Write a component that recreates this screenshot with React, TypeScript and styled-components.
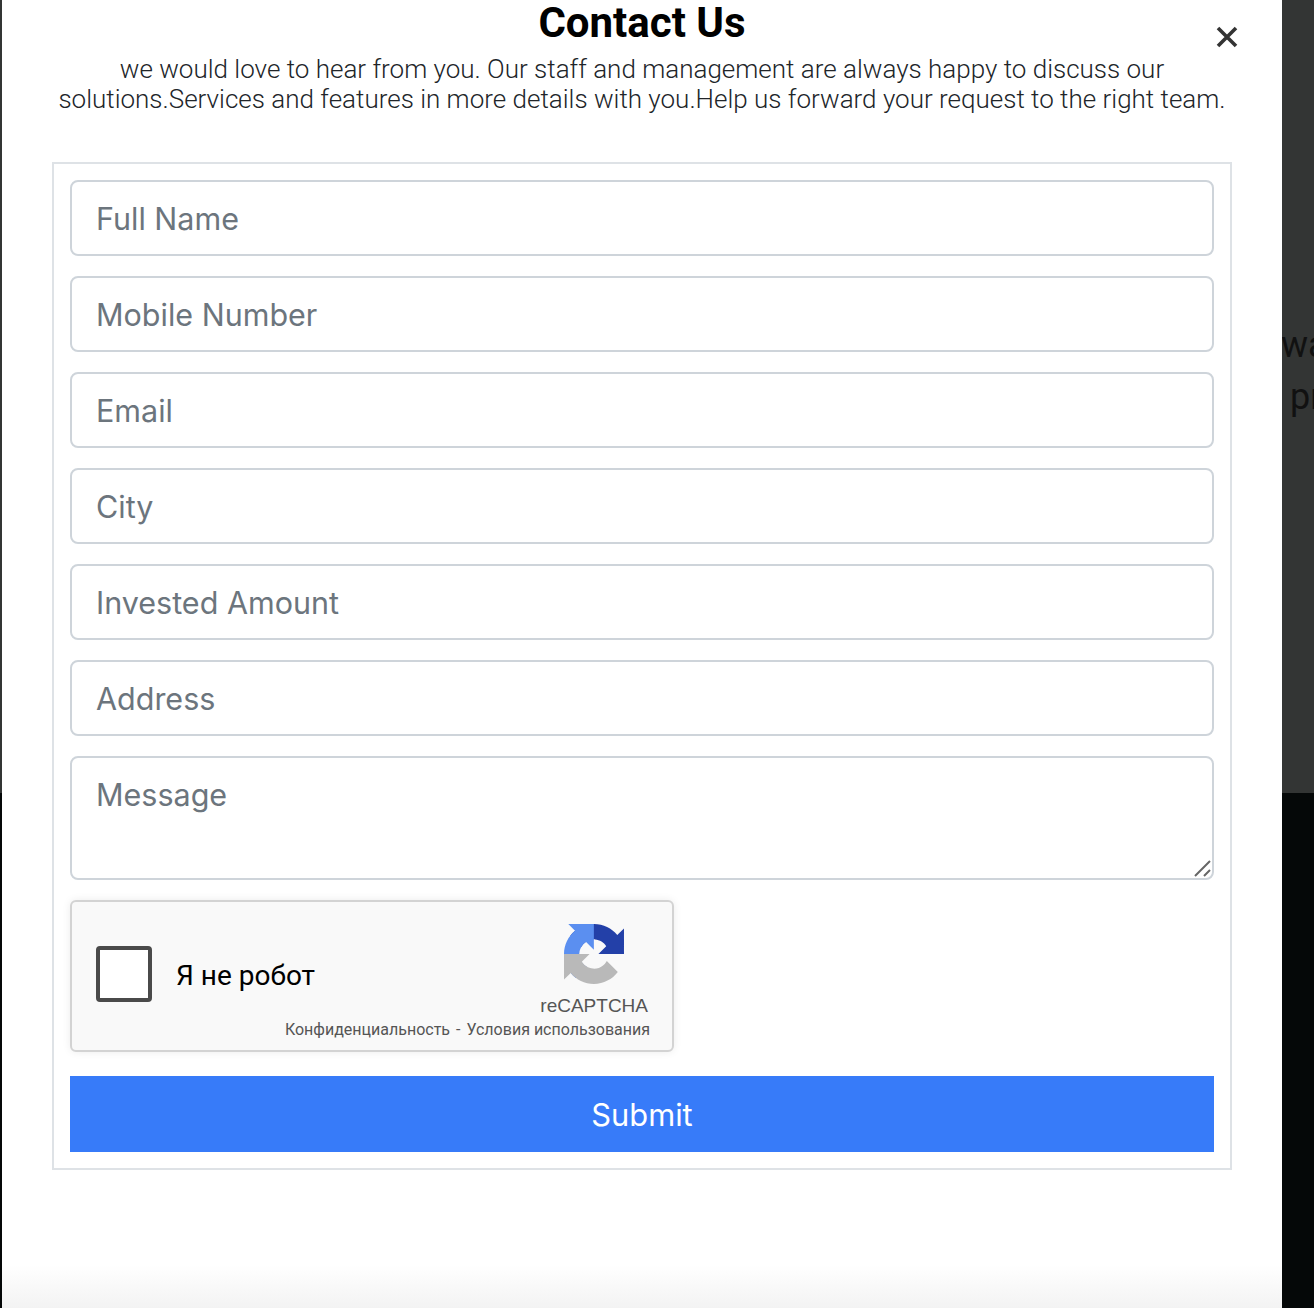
import styled, { createGlobalStyle } from 'styled-components'

const fields = ['Full Name', 'Mobile Number', 'Email', 'City', 'Invested Amount', 'Address']

const GlobalStyle = createGlobalStyle`
  html, body {
    margin: 0;
    padding: 0;
    background: #050808;
  }
  * {
    box-sizing: border-box;
  }
`

const App = () => {
  return (
    <Page>
      <GlobalStyle />
      <Backdrop>
        <BackdropLine $indent={1281}>wa</BackdropLine>
        <BackdropLine $indent={1290}>pr</BackdropLine>
      </Backdrop>
      <Modal>
        <CloseButton aria-label='Close'>
          <svg width='24' height='24' viewBox='0 0 24 24'>
            <path d='M3 3 L21 21 M21 3 L3 21' stroke='#333' strokeWidth='3.6' fill='none' />
          </svg>
        </CloseButton>
        <Title>Contact Us</Title>
        <Intro>
          we would love to hear from you. Our staff and management are always happy to discuss our
          <br />
          solutions.Services and features in more details with you.Help us forward your request to the right team.
        </Intro>
        <Form>
          {fields.map((field) => (
            <Input key={field} placeholder={field} />
          ))}
          <MessageWrap>
            <Message placeholder='Message' />
            <Grip width='18' height='18' viewBox='0 0 18 18'>
              <path d='M1 16 L16 1 M10 16 L16 10' stroke='#666' strokeWidth='2' fill='none' />
            </Grip>
          </MessageWrap>
          <Captcha>
            <CheckBox />
            <CaptchaLabel>Я не робот</CaptchaLabel>
            <CaptchaBrand>
              <CaptchaLogo viewBox='0 0 64 64'>
                <path d='M64 31.955l-.033-1.37V4.687l-7.16 7.16C50.948 4.674 42.033.093 32.05.093c-10.4 0-19.622 4.96-25.458 12.64l11.736 11.86a15.55 15.55 0 0 1 4.754-5.334c2.05-1.6 4.952-2.906 8.968-2.906.485 0 .86.057 1.135.163 4.976.393 9.288 3.14 11.828 7.124l-8.307 8.307 32.294.007' fill='#2340a8' />
                <path d='M31.862.094l-1.37.033H4.594l7.16 7.16C4.58 13.147 0 22.06 0 32.046c0 10.4 4.96 19.622 12.64 25.458l11.86-11.736a15.55 15.55 0 0 1-5.334-4.754c-1.6-2.05-2.906-4.952-2.906-8.968 0-.485.057-.86.163-1.135.393-4.976 3.14-9.288 7.124-11.828l8.307 8.307.007-32.294' fill='#5b8ff0' />
                <path d='M.001 32.045l.033 1.37v25.898l7.16-7.16c5.86 7.173 14.775 11.754 24.76 11.754 10.4 0 19.621-4.96 25.458-12.64L45.677 39.407a15.55 15.55 0 0 1-4.754 5.334c-2.05 1.6-4.952 2.906-8.968 2.906-.485 0-.86-.057-1.135-.163-4.976-.393-9.288-3.14-11.828-7.124l8.307-8.307-32.294-.007' fill='#b9b9b9' />
              </CaptchaLogo>
              <CaptchaName>reCAPTCHA</CaptchaName>
            </CaptchaBrand>
            <CaptchaLinks>
              <span>Конфиденциальность</span>
              <span>-</span>
              <span>Условия использования</span>
            </CaptchaLinks>
          </Captcha>
          <Submit type='button'>Submit</Submit>
        </Form>
      </Modal>
    </Page>
  )
}

const Page = styled.div`
  position: relative;
  height: 1308px;
  overflow: hidden;
  background: #050808;
  font-family: Roboto, "Liberation Sans", sans-serif;
`

// dimmed page behind the modal, only a sliver of it shows
const Backdrop = styled.div`
  height: 793px;
  padding-top: 319px;
  background: #333534;
  overflow: hidden;
`

const BackdropLine = styled.div<{ $indent: number }>`
  margin-left: ${(p) => p.$indent}px;
  font-size: 36px;
  line-height: 52px;
  color: #111;
  white-space: nowrap;
`

const Modal = styled.div`
  position: absolute;
  top: 0;
  left: 2px;
  width: 1280px;
  height: 1308px;
  padding: 0 50px;
  display: flex;
  flex-direction: column;
  background: linear-gradient(to bottom, #fff 1265px, #f3f3f3 1308px);
`

const CloseButton = styled.div`
  position: absolute;
  top: 25px;
  left: 1213px;
  width: 24px;
  height: 24px;
  display: flex;
`

const Title = styled.h1`
  margin: 0;
  text-align: center;
  font-size: 42px;
  line-height: 46px;
  font-weight: 700;
  color: #000;
`

const Intro = styled.p`
  margin: 8px 0 48px;
  text-align: center;
  font-size: 26px;
  line-height: 30px;
  font-weight: 300;
  color: #212529;
  white-space: nowrap;
`

const Form = styled.form`
  width: 1180px;
  height: 1008px;
  padding: 16px;
  display: flex;
  flex-direction: column;
  gap: 20px;
  border: 2px solid #dee2e6;
`

const Input = styled.input`
  display: block;
  width: 100%;
  height: 76px;
  flex: none;
  padding: 0 24px;
  border: 2px solid #ced4da;
  border-radius: 8px;
  background: #fff;
  font-family: Inter, Roboto, sans-serif;
  font-size: 30.5px;

  &::placeholder {
    color: #6c757d;
    opacity: 1;
  }
`

const MessageWrap = styled.div`
  position: relative;
  height: 124px;
  flex: none;
`

const Message = styled.textarea`
  display: block;
  width: 100%;
  height: 100%;
  padding: 13px 24px;
  border: 2px solid #ced4da;
  border-radius: 8px;
  resize: none;
  font-family: Inter, Roboto, sans-serif;
  font-size: 30.5px;
  line-height: 48px;

  &::placeholder {
    color: #6c757d;
    opacity: 1;
  }
`

const Grip = styled.svg`
  position: absolute;
  right: 2px;
  bottom: 2px;
`

const Captcha = styled.div`
  position: relative;
  width: 604px;
  height: 152px;
  flex: none;
  margin-bottom: 4px;
  padding-left: 24px;
  display: flex;
  align-items: center;
  background: #f9f9f9;
  border: 2px solid #d3d3d3;
  border-radius: 6px;
  box-shadow: 0 0 8px rgba(0, 0, 0, 0.08);
`

const CheckBox = styled.div`
  width: 56px;
  height: 56px;
  margin-top: -4px;
  background: #fff;
  border: 4px solid #4a4a4a;
  border-radius: 4px;
`

const CaptchaLabel = styled.span`
  margin-left: 24px;
  margin-top: -2px;
  font-size: 28px;
  color: #000;
`

const CaptchaBrand = styled.div`
  position: absolute;
  top: 22px;
  right: 24px;
  display: flex;
  flex-direction: column;
  align-items: center;
  gap: 10px;
`

const CaptchaLogo = styled.svg`
  width: 60px;
  height: 60px;
  display: block;
`

const CaptchaName = styled.span`
  font-family: "Liberation Sans", Arial, sans-serif;
  font-size: 19px;
  line-height: 24px;
  color: #555;
`

const CaptchaLinks = styled.div`
  position: absolute;
  right: 22px;
  bottom: 10px;
  display: flex;
  gap: 6px;
  font-size: 16px;
  line-height: 20px;
  color: #555;
  white-space: nowrap;
`

const Submit = styled.button`
  width: 100%;
  height: 76px;
  flex: none;
  padding: 1px 0 0;
  border: none;
  background: #377bf9;
  color: #fff;
  font-family: Inter, Roboto, sans-serif;
  font-size: 30.8px;
`

export default App
